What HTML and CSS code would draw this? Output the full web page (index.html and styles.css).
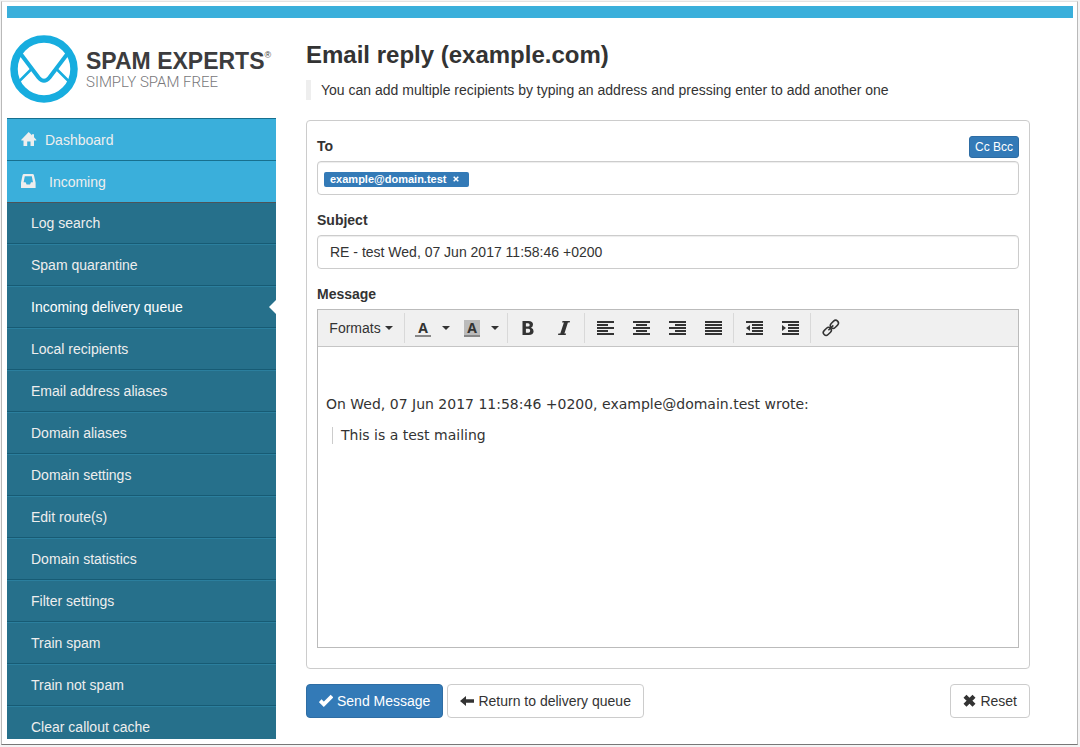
FILE: index.html
```html
<!DOCTYPE html>
<html lang="en">
<head>
<meta charset="utf-8">
<title>Email reply (example.com)</title>
<link rel="stylesheet" href="styles.css">
</head>
<body>
<div class="frame">
  <div class="topbar"></div>
  <div class="layout">
    <aside class="sidebar">
      <a class="logo" href="#" aria-label="Spam Experts home">
        <svg class="logo-mark" viewBox="0 0 68 68" aria-hidden="true">
          <g fill="none" stroke="#17addf">
            <circle cx="34" cy="34" r="30" stroke-width="7.500"/>
            <path d="M10 18l18.500 24.500q5.500 6.500 11 0L58 18" stroke-width="4"/>
            <path d="M9 46.500l13-13M59 46.500l-13-13" stroke-width="2.500"/>
          </g>
        </svg>
        <span class="logo-text">
          <span class="logo-name">SPAM EXPERTS<span class="logo-reg">®</span></span>
          <span class="logo-tag">SIMPLY SPAM FREE</span>
        </span>
      </a>
      <nav class="nav">
        <a class="nav-top" href="#"><svg class="icon" viewBox="0 0 16 16" aria-hidden="true"><path fill="currentColor" d="M7.700 0L11 3.200V2.200h2V5.200L15.300 7.800V8.500H13V14H9.500V9.500H6.200V14H2.500V8.500H.3V7.800z"/></svg>Dashboard</a>
        <a class="nav-top nav-incoming" href="#"><svg class="icon" viewBox="0 0 16 16" aria-hidden="true"><path fill="currentColor" fill-rule="evenodd" d="M3 0h8.500q1.200 0 1.400 1L14.600 8.500V14H0V8.500L1.600 1Q1.800 0 3 0zM3.800 2.300L2.600 8.200H4.600L5.600 10.500H9L10 8.200h2L10.800 2.300z"/></svg>Incoming</a>
        <a class="nav-sub" href="#">Log search</a>
        <a class="nav-sub" href="#">Spam quarantine</a>
        <a class="nav-sub is-active" href="#" aria-current="page">Incoming delivery queue</a>
        <a class="nav-sub" href="#">Local recipients</a>
        <a class="nav-sub" href="#">Email address aliases</a>
        <a class="nav-sub" href="#">Domain aliases</a>
        <a class="nav-sub" href="#">Domain settings</a>
        <a class="nav-sub" href="#">Edit route(s)</a>
        <a class="nav-sub" href="#">Domain statistics</a>
        <a class="nav-sub" href="#">Filter settings</a>
        <a class="nav-sub" href="#">Train spam</a>
        <a class="nav-sub" href="#">Train not spam</a>
        <a class="nav-sub" href="#">Clear callout cache</a>
      </nav>
    </aside>
    <main class="main">
      <h1 class="title">Email reply (example.com)</h1>
      <p class="hint">You can add multiple recipients by typing an address and pressing enter to add another one</p>
      <form>
        <div class="panel">
          <div class="label-row">
            <label class="label" for="to">To</label>
            <button class="btn-small" type="button">Cc Bcc</button>
          </div>
          <div class="control tokens">
            <span class="token">example@domain.test<button class="token-x" type="button" aria-label="Remove"><svg viewBox="0 0 6 6" aria-hidden="true"><path d="M.7.7l4.600 4.600M5.300.7L.7 5.300" stroke="#fff" stroke-width="1.500"/></svg></button></span>
            <input class="token-input" id="to" type="text">
          </div>
          <label class="label" for="subject">Subject</label>
          <input class="control subject" id="subject" type="text" value="RE - test Wed, 07 Jun 2017 11:58:46 +0200">
          <span class="label" id="message-label">Message</span>
          <div class="editor">
            <div class="toolbar" role="toolbar" aria-label="Formatting">
              <div class="group">
                <button class="tool formats" type="button">Formats<span class="caret"></span></button>
              </div>
              <div class="group">
                <button class="tool split" type="button" aria-label="Text color"><span class="letter">A</span><span class="caret"></span></button>
                <button class="tool split" type="button" aria-label="Background color"><span class="letter letter-bg">A</span><span class="caret"></span></button>
              </div>
              <div class="group">
                <button class="tool" type="button" aria-label="Bold"><svg class="glyph" viewBox="0 0 18 18"><path fill="#333" fill-rule="evenodd" d="M3.500 2H9.500q4.500 0 4.500 3.600 0 2.200-2 3.100 2.600.9 2.600 3.600 0 3.700-4.800 3.700H3.500zm3.400 2.300v3.300H9q1.700 0 1.700-1.600T9 4.300zm0 5.500v3.900h2.400q1.900 0 1.900-2t-1.900-1.900z"/></svg></button>
                <button class="tool" type="button" aria-label="Italic"><svg class="glyph" viewBox="0 0 18 18"><path fill="#333" d="M7.500 2H15l-.4 1.400h-1.700L9.400 14.600h1.700L10.700 16H3l.4-1.400h1.900L8.900 3.400H7.100z"/></svg></button>
              </div>
              <div class="group">
                <button class="tool" type="button" aria-label="Align left"><svg class="glyph" viewBox="0 0 18 18"><path stroke="#333" stroke-width="2" d="M1 3h17M1 6h11M1 9h17M1 12h11M1 15h17"/></svg></button>
                <button class="tool" type="button" aria-label="Align center"><svg class="glyph" viewBox="0 0 18 18"><path stroke="#333" stroke-width="2" d="M1 3h17M4 6h11M1 9h17M4 12h11M1 15h17"/></svg></button>
                <button class="tool" type="button" aria-label="Align right"><svg class="glyph" viewBox="0 0 18 18"><path stroke="#333" stroke-width="2" d="M1 3h17M7 6h11M1 9h17M7 12h11M1 15h17"/></svg></button>
                <button class="tool" type="button" aria-label="Justify"><svg class="glyph" viewBox="0 0 18 18"><path stroke="#333" stroke-width="2" d="M1 3h17M1 6h17M1 9h17M1 12h17M1 15h17"/></svg></button>
              </div>
              <div class="group">
                <button class="tool" type="button" aria-label="Decrease indent"><svg class="glyph" viewBox="0 0 18 18"><path stroke="#333" stroke-width="2" d="M1 3h17M7 6h11M7 9h11M7 12h11M1 15h17"/><path fill="#333" d="M5 6v6L1 9z"/></svg></button>
                <button class="tool" type="button" aria-label="Increase indent"><svg class="glyph" viewBox="0 0 18 18"><path stroke="#333" stroke-width="2" d="M1 3h17M7 6h11M7 9h11M7 12h11M1 15h17"/><path fill="#333" d="M1 6v6l4-3z"/></svg></button>
              </div>
              <div class="group">
                <button class="tool" type="button" aria-label="Insert link"><svg class="glyph" viewBox="0 0 18 18"><g fill="none" stroke="#333" stroke-width="1.500" transform="rotate(-45 9 9)"><rect x="-.5" y="6" width="9" height="5.600" rx="2.800"/><rect x="9.500" y="6" width="9" height="5.600" rx="2.800"/><path d="M5.500 8.800h7"/></g></svg></button>
              </div>
            </div>
            <div class="body" contenteditable="true" role="textbox" aria-multiline="true" aria-labelledby="message-label">
              <p>On Wed, 07 Jun 2017 11:58:46 +0200, example@domain.test wrote:</p>
              <blockquote>This is a test mailing</blockquote>
            </div>
          </div>
        </div>
        <div class="actions">
          <button class="btn btn-primary" type="submit"><svg class="btn-icon" viewBox="0 0 14 14" aria-hidden="true"><path fill="none" stroke="currentColor" stroke-width="3.800" d="M1.200 6.700l3.600 3.600L13 2.100"/></svg>Send Message</button>
          <button class="btn" type="button"><svg class="btn-icon" viewBox="0 0 14 14" aria-hidden="true"><path fill="currentColor" d="M0 7l6-5v3.200h8v3.600H6V12z"/></svg>Return to delivery queue</button>
          <button class="btn btn-end" type="reset"><svg class="btn-icon icon-reset" viewBox="0 0 13 14" aria-hidden="true"><path stroke="currentColor" stroke-width="4.200" d="M2 2.200l9 9M11 2.200l-9 9"/></svg>Reset</button>
        </div>
      </form>
    </main>
  </div>
</div>
</body>
</html>
```
FILE: styles.css
```css
* { box-sizing: border-box; }

body {
  margin: 0;
  height: 100vh;
  padding: 1px 2px 2px 1px;
  overflow: hidden;
  background: #f4f4f4;
  color: #333;
  font: 14px/20px "Liberation Sans", Arial, sans-serif;
}

button, input { font: inherit; color: inherit; }

.frame {
  display: flex;
  flex-direction: column;
  height: 100%;
  padding: 4px 4px 5px 5px;
  border: 1px solid #b9b9b9;
  border-top-color: #e2e2e2;
  border-bottom-color: #777;
  background: #fff;
}

.topbar { flex: none; height: 12px; background: #3aafdb; }

.layout { display: flex; flex: 1; min-height: 0; }

.sidebar { flex: none; width: 269px; overflow: hidden; }

.logo {
  display: flex;
  gap: 8px;
  height: 100px;
  padding: 17px 0 0 3px;
  color: #3c3c3e;
  text-decoration: none;
}

.logo-mark { width: 68px; height: 68px; }

.logo-text {
  display: flex;
  flex-direction: column;
  padding-top: 13px;
  white-space: nowrap;
}

.logo-name { display: flex; font-size: 23px; font-weight: 700; line-height: 26px; }
.logo-reg { font-size: 9px; font-weight: 400; line-height: 14px; }
.logo-tag { color: #77777a; font: 300 15px/16px Roboto, "Liberation Sans", sans-serif; }

.nav a { display: block; color: #eee; text-decoration: none; }

.nav .nav-top {
  display: flex;
  align-items: center;
  gap: 8px;
  height: 42px;
  padding-left: 14px;
  border-top: 1px solid #17708f;
  background: #3aafdb;
}

.nav .nav-incoming { gap: 12px; }

.icon { width: 16px; height: 16px; }

.nav .nav-sub {
  position: relative;
  height: 42px;
  padding: 10px 24px;
  border-top: 1px solid #2b7f9e;
  border-bottom: 1px solid #175b74;
  background: #26708b;
}

.nav .nav-incoming + .nav-sub { border-top-color: #4d5459; }

.nav .is-active { color: #fff; }

.is-active::after {
  content: "";
  position: absolute;
  right: 0;
  top: 13px;
  border: 7px solid transparent;
  border-left: 0;
  border-right-color: #fff;
}

.main { flex: 1; min-width: 0; padding: 22px 43px 0 30px; }

.title { margin: 0 0 10px; font-size: 24px; line-height: 30px; }

.hint { margin: 0 0 20px; padding-left: 10px; border-left: 5px solid #eee; }

.panel { padding: 15px 10px 20px; border: 1px solid #ccc; border-radius: 4px; }

.label-row { display: flex; justify-content: space-between; height: 25px; }

.label { display: block; font-weight: 700; margin-bottom: 5px; }

.btn-small {
  height: 22px;
  padding: 0 5px;
  border: 1px solid #2e6da4;
  border-radius: 3px;
  background: #337ab7;
  color: #fff;
  font-size: 12px;
  line-height: 18px;
}

.control {
  width: 100%;
  height: 34px;
  margin-bottom: 15px;
  border: 1px solid #ccc;
  border-radius: 4px;
  background: #fff;
  box-shadow: inset 0 1px 1px rgba(0, 0, 0, .075);
}

.subject { display: block; padding: 6px 12px; }

.tokens { display: flex; align-items: center; gap: 4px; padding: 2px 6px 0; }

.token {
  display: flex;
  align-items: center;
  gap: 7px;
  height: 15px;
  padding: 0 10px 0 6px;
  border-radius: 2px;
  background: #337ab7;
  color: #fff;
  font-size: 11px;
  font-weight: 700;
  line-height: 15px;
}

.token-x { display: flex; padding: 0; border: 0; background: none; }
.token-x svg { width: 6px; height: 6px; }

.token-input { flex: 1; min-width: 0; border: 0; outline: 0; background: none; }

.editor { border: 1px solid #bbb; }

.toolbar { display: flex; padding: 3px 0; border-bottom: 1px solid #c5c5c5; background: #f0f0f0; }

.group { display: flex; padding: 0 2px; }
.group + .group { border-left: 1px solid #d9d9d9; }

.tool {
  display: flex;
  align-items: center;
  justify-content: center;
  width: 36px;
  height: 30px;
  padding: 0;
  border: 0;
  background: none;
}

.formats { width: 82px; gap: 4px; }

.caret { border: 4px solid transparent; border-top-color: #333; border-bottom: 0; }

.split { width: 49px; gap: 11px; padding-left: 2px; }

.letter {
  width: 16px;
  height: 17px;
  border-bottom: 2px solid #888;
  font: 700 14px/16px "Open Sans", sans-serif;
}

.letter-bg { background: #bbb; }

.glyph { width: 18px; height: 18px; overflow: visible; }

.body {
  min-height: 300px;
  padding: 47px 8px 8px;
  font: 14px/20px "DejaVu Sans", Verdana, sans-serif;
  outline: 0;
}

.body p { margin: 0 0 13px; }

.body blockquote { margin: 0 6px; padding-left: 8px; border-left: 1px solid #ccc; line-height: 17px; }

.actions { display: flex; gap: 4px; margin-top: 15px; }

.btn {
  display: flex;
  align-items: center;
  gap: 4px;
  height: 34px;
  padding: 0 12px;
  border: 1px solid #ccc;
  border-radius: 4px;
  background: #fff;
  white-space: nowrap;
}

.btn-primary { border-color: #2e6da4; background: #337ab7; color: #fff; }

.btn-end { margin-left: auto; }

.btn-icon { width: 14px; height: 14px; }
.icon-reset { width: 13px; }
```
